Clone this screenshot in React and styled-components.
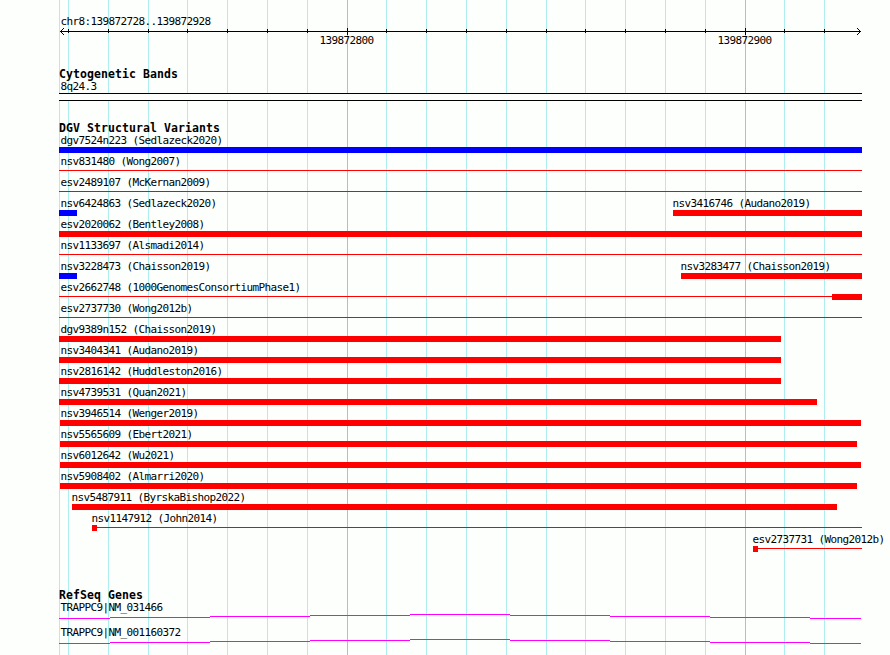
import styled, { createGlobalStyle } from "styled-components";

const LEFT = 59;
const RIGHT = 862;
const minorLines = [59, 68, 108, 148, 187, 227, 267, 307, 386, 426, 466, 506, 546, 585, 625, 665, 705, 784, 824];
const majorLines = [347, 745];
const introns = [51, 100, 100, 100, 100, 100, 100, 100, 51];
const intronDrops = [4, 3, 2, 1, 0, 1, 2, 3, 4];

const thin = (start, end) => ({ start, end, size: 1 });
const thick = (start, end, color = "#ff0000") => ({ start, end, size: 6, color });

const variants = [
  [{ label: "dgv7524n223 (Sedlazeck2020)", parts: [thick(59, 862, "#0000ff")] }],
  [{ label: "nsv831480 (Wong2007)", parts: [thin(59, 862)] }],
  [{ label: "esv2489107 (McKernan2009)", parts: [thin(59, 862)] }],
  [
    { label: "nsv6424863 (Sedlazeck2020)", parts: [thick(59, 77, "#0000ff")] },
    { label: "nsv3416746 (Audano2019)", parts: [thick(673, 862)] },
  ],
  [{ label: "esv2020062 (Bentley2008)", parts: [thick(59, 862)] }],
  [{ label: "nsv1133697 (Alsmadi2014)", parts: [thin(59, 862)] }],
  [
    { label: "nsv3228473 (Chaisson2019)", parts: [thick(59, 77, "#0000ff")] },
    { label: "nsv3283477 (Chaisson2019)", parts: [thick(681, 862)] },
  ],
  [{ label: "esv2662748 (1000GenomesConsortiumPhase1)", parts: [thin(59, 832), thick(832, 862)] }],
  [{ label: "esv2737730 (Wong2012b)", parts: [thin(59, 862)] }],
  [{ label: "dgv9389n152 (Chaisson2019)", parts: [thick(59, 781)] }],
  [{ label: "nsv3404341 (Audano2019)", parts: [thick(59, 781)] }],
  [{ label: "nsv2816142 (Huddleston2016)", parts: [thick(59, 781)] }],
  [{ label: "nsv4739531 (Quan2021)", parts: [thick(59, 817)] }],
  [{ label: "nsv3946514 (Wenger2019)", parts: [thick(60, 861)] }],
  [{ label: "nsv5565609 (Ebert2021)", parts: [thick(60, 857)] }],
  [{ label: "nsv6012642 (Wu2021)", parts: [thick(60, 861)] }],
  [{ label: "nsv5908402 (Almarri2020)", parts: [thick(60, 857)] }],
  [{ label: "nsv5487911 (ByrskaBishop2022)", parts: [thick(72, 837)] }],
  [{ label: "nsv1147912 (John2014)", parts: [thick(92, 97), thin(97, 862)] }],
  [{ label: "esv2737731 (Wong2012b)", parts: [thick(753, 758), thin(758, 862)] }],
];

const GlobalStyle = createGlobalStyle`
  body {
    margin: 0;
    background: #fdfffc;
    overflow: hidden;
  }
`;

const Browser = styled.main`
  position: relative;
  isolation: isolate;
  box-sizing: border-box;
  width: 890px;
  height: 655px;
  padding: 15px 0 0 ${LEFT}px;
  overflow: hidden;
  font-family: "DejaVu Sans Mono", monospace;
  color: #000000;
`;

const Grid = styled.svg`
  position: absolute;
  top: 0;
  left: 0;
  z-index: -1;
`;

const Label = styled.div`
  height: 13px;
  margin-left: ${({ $indent = 1 }) => $indent}px;
  padding-left: 0.4px;
  font-size: 11px;
  line-height: 13px;
  letter-spacing: -0.622px;
  white-space: pre;
`;

const Heading = styled.h2`
  height: 12px;
  margin: 0;
  font-size: 11.5px;
  font-weight: bold;
  line-height: 12px;
  letter-spacing: 0.077px;
  white-space: pre;
`;

const Ruler = styled.header`
  height: 53px;
`;

const Scale = styled.svg`
  display: block;
  height: 7px;
`;

const Coordinates = styled.div`
  display: flex;
  margin-top: -1px;
  padding-left: 260px;
`;

const Coordinate = styled(Label)`
  box-sizing: border-box;
  flex: none;
  width: 398px;
`;

const Cytoband = styled.section`
  height: 54px;
`;

const Band = styled.div`
  box-sizing: border-box;
  width: ${RIGHT - LEFT}px;
  height: 8px;
  border: solid #000000;
  border-width: 1px 0;
  background: #fdfffc;
`;

const Variants = styled.section`
  height: 467px;
`;

const Row = styled.div`
  display: flex;
  height: 21px;
`;

const Feature = styled.div`
  flex: none;
  width: ${({ $width }) => $width}px;
  margin-left: ${({ $offset }) => $offset}px;
`;

const Glyph = styled.div`
  display: flex;
  height: 6px;
`;

const Segment = styled.div`
  width: ${({ $width }) => $width}px;
  height: ${({ $size }) => $size}px;
  margin-top: ${({ $size }) => ($size === 1 ? 2 : 0)}px;
  background: ${({ $color = "#ff0000" }) => $color};
`;

const Gene = styled.div`
  height: 25px;
`;

const Transcript = styled.div`
  display: flex;
`;

const Intron = styled.div`
  width: ${({ $width }) => $width}px;
  height: 1px;
  margin-top: ${({ $drop }) => $drop}px;
  background: #ff00ff;
`;

const VariantRow = ({ features }) => {
  let cursor = LEFT;
  return (
    <Row>
      {features.map(({ label, parts }) => {
        const start = parts[0].start;
        const end = parts[parts.length - 1].end;
        const offset = start - cursor;
        cursor = end;
        return (
          <Feature key={label} $offset={offset} $width={end - start}>
            {/* labels never start left of the panel's own inset */}
            <Label $indent={Math.max(LEFT + 1 - start, -1)}>{label}</Label>
            <Glyph>
              {parts.map((part) => (
                <Segment key={part.start} $width={part.end - part.start} $size={part.size} $color={part.color} />
              ))}
            </Glyph>
          </Feature>
        );
      })}
    </Row>
  );
};

const GeneRow = ({ name }) => (
  <Gene>
    <Label>{name}</Label>
    <Transcript>
      {introns.map((width, i) => (
        <Intron key={i} $width={width} $drop={intronDrops[i]} />
      ))}
    </Transcript>
  </Gene>
);

export default function App() {
  return (
    <Browser>
      <GlobalStyle />
      <Grid width="890" height="655" shapeRendering="crispEdges">
        {minorLines.map((x) => (
          <rect key={x} x={x} width="1" height="655" fill="#afeeee" />
        ))}
        {majorLines.map((x) => (
          <rect key={x} x={x} width="1" height="655" fill="#87ceeb" />
        ))}
      </Grid>
      <Ruler>
        <Label>chr8:139872728..139872928</Label>
        <Scale width="803" height="7" shapeRendering="crispEdges">
          <rect x="1" y="3" width="801" height="1" />
          {[0, 1, 2, 3].map((i) => (
            <g key={i}>
              <rect x={1 + i} y={3 - i} width="1" height="1" />
              <rect x={1 + i} y={3 + i} width="1" height="1" />
              <rect x={801 - i} y={3 - i} width="1" height="1" />
              <rect x={801 - i} y={3 + i} width="1" height="1" />
            </g>
          ))}
          {minorLines.slice(1).map((x) => (
            <rect key={x} x={x - LEFT} y="1" width="1" height="4" />
          ))}
          {majorLines.map((x) => (
            <rect key={x} x={x - LEFT} y="0" width="1" height="7" />
          ))}
        </Scale>
        <Coordinates>
          <Coordinate $indent={0}>139872800</Coordinate>
          <Coordinate $indent={0}>139872900</Coordinate>
        </Coordinates>
      </Ruler>
      <Cytoband>
        <Heading>Cytogenetic Bands</Heading>
        <Label>8q24.3</Label>
        <Band />
      </Cytoband>
      <Variants>
        <Heading>DGV Structural Variants</Heading>
        {variants.map((features) => (
          <VariantRow key={features[0].label} features={features} />
        ))}
      </Variants>
      <section>
        <Heading>RefSeq Genes</Heading>
        <GeneRow name="TRAPPC9|NM_031466" />
        <GeneRow name="TRAPPC9|NM_001160372" />
      </section>
    </Browser>
  );
}
